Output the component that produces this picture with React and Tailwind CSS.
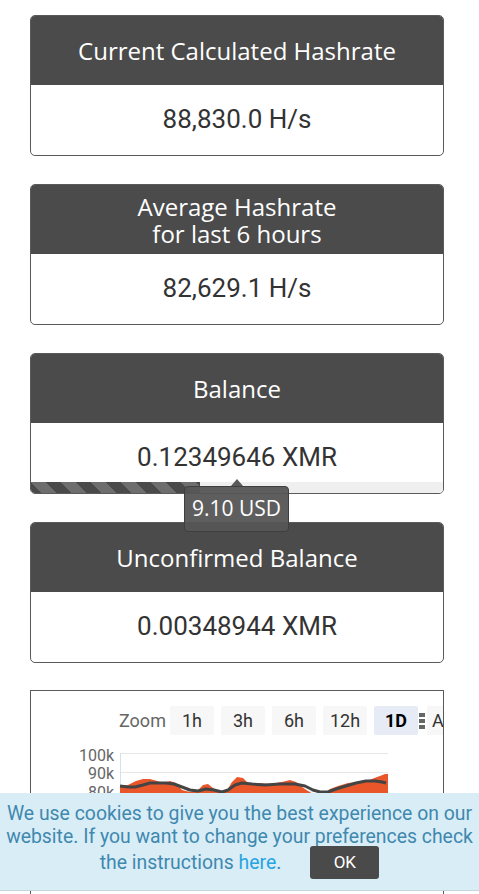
import React from "react";

const HEAD = { fontFamily: '"Open Sans", "Noto Sans", sans-serif' };
const VAL = { fontFamily: 'Roboto, "Noto Sans", sans-serif' };

function Card({ title, value, children }) {
  return (
    <div className="w-[414px] border border-[#5a5a5a] rounded-[5px] overflow-hidden bg-white">
      <div
        className="h-[69px] bg-[#4b4b4b] text-white text-[24px] leading-[27px] flex flex-col items-center justify-center text-center"
        style={HEAD}
      >
        {title}
      </div>
      <div className="h-[70px] relative flex items-center justify-center">
        <span className="text-[26px] text-[#333] -mt-[2px]" style={VAL}>
          {value}
        </span>
        {children}
      </div>
    </div>
  );
}

function pts(arr) {
  return arr.map(([x, y]) => `${x - 31},${y - 740}`).join(" ");
}

const areaTop = [
  [120, 786], [128, 785], [136, 781], [143, 779], [150, 779], [157, 781], [163, 783],
  [170, 781], [176, 783], [182, 790], [190, 792], [198, 790], [203, 785], [208, 784],
  [213, 788], [219, 792], [226, 792], [232, 782], [237, 777], [243, 778], [248, 783],
  [258, 783], [270, 784], [282, 782], [290, 780], [296, 782], [302, 787], [308, 791],
  [315, 795], [322, 795], [330, 789], [338, 786], [348, 783], [358, 782], [366, 781],
  [372, 779], [377, 777], [380, 776], [385, 774],
];
const line = [
  [120, 786], [128, 787], [135, 787], [143, 785], [150, 783], [158, 783], [166, 783],
  [174, 784], [182, 787], [190, 790], [198, 791], [206, 789], [214, 790], [222, 792],
  [228, 790], [235, 785], [242, 783], [252, 784], [265, 785], [280, 784], [295, 784],
  [305, 786], [313, 790], [320, 792], [328, 792], [336, 789], [346, 786], [356, 783],
  [366, 781], [375, 781], [382, 782], [386, 783],
];

function Chart() {
  const fill = [[120, 850], ...areaTop, [388, 774], [388, 850]];
  return (
    <svg width="412" height="200" className="block">
      <line x1="89" y1="13.5" x2="357" y2="13.5" stroke="#e6e6e6" strokeWidth="1" />
      <line x1="89" y1="32.5" x2="357" y2="32.5" stroke="#e6e6e6" strokeWidth="1" />
      <line x1="89" y1="51.5" x2="357" y2="51.5" stroke="#e6e6e6" strokeWidth="1" />
      <line x1="89.5" y1="13" x2="89.5" y2="120" stroke="#cfe3ef" strokeWidth="1" />
      <g fill="#666" fontSize="16" textAnchor="end" style={VAL}>
        <text x="83" y="21">100k</text>
        <text x="83" y="39">90k</text>
        <text x="83" y="58">80k</text>
      </g>
      <polygon points={pts(fill)} fill="#e8562a" />
      <polyline points={pts(line)} fill="none" stroke="#444" strokeWidth="3" strokeLinejoin="round" />
    </svg>
  );
}

function Btn({ children, active }) {
  return (
    <div
      className={
        "shrink-0 w-[44px] h-[29px] flex items-center justify-center rounded-[2px] text-[18px] " +
        (active ? "bg-[#e6ebf5] text-black font-bold" : "bg-[#f7f7f7] text-[#333]")
      }
      style={VAL}
    >
      {children}
    </div>
  );
}

export default function App() {
  return (
    <div className="relative w-[479px] h-[894px] overflow-hidden bg-white">
      <div className="flex flex-col gap-[28px] pt-[15px] pl-[30px]">
        <Card title="Current Calculated Hashrate" value="88,830.0 H/s" />
        <Card
          title={
            <>
              <span>Average Hashrate</span>
              <span>for last 6 hours</span>
            </>
          }
          value="82,629.1 H/s"
        />
        <Card title="Balance" value="0.12349646 XMR">
          <div className="absolute left-0 right-0 bottom-0 h-[11px] bg-[#efefef]">
            <div className="h-full w-[169px] bg-[#4a4a4a] bg-[linear-gradient(45deg,rgba(255,255,255,0.2)_25%,transparent_25%,transparent_50%,rgba(255,255,255,0.2)_50%,rgba(255,255,255,0.2)_75%,transparent_75%,transparent)] bg-[length:30px_30px]" />
          </div>
        </Card>
        <Card title="Unconfirmed Balance" value="0.00348944 XMR" />
        <div className="w-[414px] h-[400px] -mt-[1px] border border-[#5a5a5a] overflow-hidden bg-white">
          <div className="flex items-center pl-[88px] pt-[15px]">
            <span className="shrink-0 w-[43px] text-[18px] text-[#666]" style={VAL}>
              Zoom
            </span>
            <div className="shrink-0 flex items-center gap-[7px] ml-[8px]">
              <Btn>1h</Btn>
              <Btn>3h</Btn>
              <Btn>6h</Btn>
              <Btn>12h</Btn>
              <Btn active>1D</Btn>
            </div>
            <div className="shrink-0 flex flex-col gap-[2px] ml-[1px]">
              <div className="w-[6px] h-[4px] bg-[#666]" />
              <div className="w-[6px] h-[4px] bg-[#666]" />
              <div className="w-[6px] h-[4px] bg-[#666]" />
            </div>
            <div className="shrink-0 w-[44px] h-[29px] bg-[#f7f7f7] flex items-center pl-[5px] text-[18px] text-[#333] ml-[2px]" style={VAL}>
              All
            </div>
          </div>
          <div className="mt-[5px]">
            <Chart />
          </div>
        </div>
      </div>

      {/* tooltip */}
      <div className="absolute left-[184px] top-[486px]">
        <div className="absolute left-[47px] -top-[7px] w-0 h-0 border-l-[6px] border-r-[6px] border-b-[7px] border-l-transparent border-r-transparent border-b-[#5a5a5a]" />
        <div
          className="w-[105px] h-[46px] rounded-[4px] bg-[#555555]/95 border border-[#3f3f3f] text-white text-[21px] flex items-center justify-center"
          style={HEAD}
        >
          9.10 USD
        </div>
      </div>

      {/* cookie banner */}
      <div
        className="absolute left-0 right-0 top-[793px] h-[98px] bg-[#d9edf7] border-b border-[#c5d6de] text-center text-[#3f88ae] text-[19.4px] leading-[23px] pt-[9px] px-[2px]"
        style={VAL}
      >
        We use cookies to give you the best experience on our website. If you want to change your preferences check the instructions{" "}
        <span className="text-[#27a3e0]">here</span>.
        <span className="inline-flex items-center justify-center align-middle ml-[29px] -mt-[2px] w-[69px] h-[33px] bg-[#4a4a4a] rounded-[3px] text-white text-[17px]">
          OK
        </span>
      </div>
    </div>
  );
}
